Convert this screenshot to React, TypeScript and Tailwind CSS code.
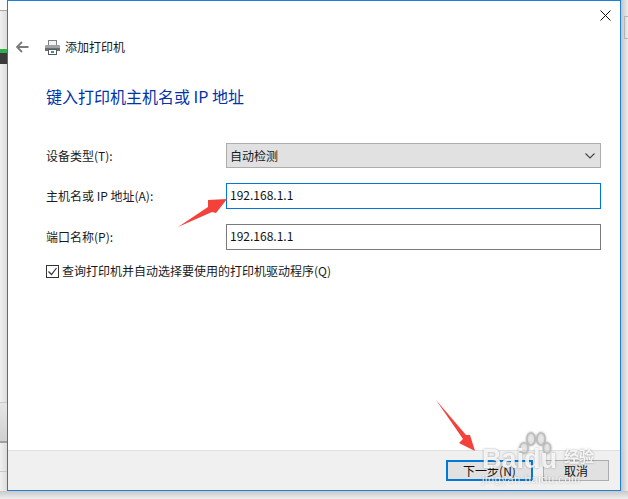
import React from 'react';

const font = "[font-family:'Noto_Sans_CJK_SC','Liberation_Sans',sans-serif]";

const Field: React.FC<{ label: string; children: React.ReactNode }> = ({ label, children }) => (
  <div className="flex items-center">
    <div className="w-[180px] text-[12px] leading-[16px] text-[#1a1a1a]">{label}</div>
    <div className="flex-1">{children}</div>
  </div>
);

const PrinterIcon = () => (
  <svg width="17" height="17" viewBox="0 0 17 17">
    <rect x="4.5" y="1.5" width="8" height="5" fill="#f4f4f4" stroke="#808080" />
    <rect x="1" y="6" width="15" height="6" rx="1" fill="#a0a3a6" />
    <rect x="1" y="9" width="15" height="3" fill="#6a6e72" />
    <rect x="4.5" y="10.5" width="8" height="5" fill="#fff" stroke="#5a5a5a" />
    <rect x="7" y="12" width="3" height="2" fill="#2f8fb8" />
  </svg>
);

const App: React.FC = () => {
  return (
    <div className={`relative w-[628px] h-[499px] overflow-hidden bg-[#e4e4e4] ${font}`}>
      <div className="flex h-[491px]">
        {/* Desktop left of the dialog */}
        <div className="w-[7px] flex flex-col bg-[#ececec]">
          <div className="h-[11px] bg-[#fafafa] border-b border-[#a8a8a8]" />
          <div className="h-[38px] bg-gradient-to-r from-[#f0f0f0] to-[#dcdcdc]" />
          <div className="h-[15px] bg-[#3a3a3a] border-t-[4px] border-[#2fb04a]" />
          <div className="h-[338px] bg-gradient-to-r from-[#f0f0f0] to-[#dcdcdc]" />
          <div className="h-[41px] border-t border-[#c8c8c8] bg-gradient-to-b from-[#e6e6e6] to-[#d0d0d0] border-b-2 border-b-[#a0a0a0]" />
          <div className="h-[29px] border-b border-[#c8c8c8] bg-gradient-to-r from-[#f0f0f0] to-[#dcdcdc]" />
          <div className="flex-1 bg-gradient-to-r from-[#f0f0f0] to-[#dcdcdc]" />
        </div>

        {/* Dialog */}
        <div className="w-[614px] flex flex-col border border-[#1f7fd6] border-l-[#2a78c4] bg-white">
          <div className="flex justify-end h-[30px] pt-[9px] pr-[9px]">
            <svg width="11" height="11" viewBox="0 0 11 11" stroke="#111" strokeWidth="1">
              <path d="M0.5 0.5L10.5 10.5M10.5 0.5L0.5 10.5" />
            </svg>
          </div>

          <div className="flex items-center h-[32px] pl-[8px]">
            <svg width="13" height="12" viewBox="0 0 13 12" fill="none" stroke="#7a7a7a" strokeWidth="1.8">
              <path d="M12.5 6H1.5M6 1L1 6l5 5" />
            </svg>
            <div className="ml-[15px]">
              <PrinterIcon />
            </div>
            <span className="ml-[4px] text-[12px] leading-[16px] text-[#1a1a1a]">添加打印机</span>
          </div>

          <div className="pl-[38px] pr-[19px] flex flex-col flex-1">
            <h1 className="mt-[21px] text-[16px] leading-[24px] font-normal text-[#0033a8]">键入打印机主机名或 IP 地址</h1>

            <div className="mt-[35px] flex flex-col gap-[15px]">
              <Field label="设备类型(T):">
                <div className="h-[25px] flex items-center justify-between pl-[3px] pr-[5px] bg-[#e1e1e1] border-[1.5px] border-[#adadad] text-[12px] text-[#1a1a1a]">
                  <span>自动检测</span>
                  <svg width="10" height="6" viewBox="0 0 10 6" fill="none" stroke="#444" strokeWidth="1.1">
                    <path d="M0.5 0.5L5 5l4.5-4.5" />
                  </svg>
                </div>
              </Field>
              <Field label="主机名或 IP 地址(A):">
                <div className="h-[26px] flex items-center pl-[3px] pb-[3px] border-[1.5px] border-[#0078d7] text-[12px] text-[#111]">192.168.1.1</div>
              </Field>
              <Field label="端口名称(P):">
                <div className="h-[26px] flex items-center pl-[3px] pb-[3px] border-[1.5px] border-[#7a7a7a] text-[12px] text-[#111]">192.168.1.1</div>
              </Field>
            </div>

            <div className="mt-[13px] flex items-center">
              <div className="w-[13px] h-[13px] border border-[#333] flex items-center justify-center">
                <svg width="11" height="11" viewBox="0 0 11 11" fill="none" stroke="#333" strokeWidth="1.2">
                  <path d="M1.5 5.5l3 3 5-6.5" />
                </svg>
              </div>
              <span className="ml-[3px] text-[12px] leading-[16px] text-[#1a1a1a]">查询打印机并自动选择要使用的打印机驱动程序(Q)</span>
            </div>
          </div>

          {/* Footer buttons */}
          <div className="h-[40px] flex items-start justify-end gap-[10px] pt-[9px] pr-[11px] bg-[#f0f0f0] border-t border-[#dfdfdf]">
            <button className="w-[87px] h-[21px] flex items-center justify-center bg-[#e1e1e1] border-2 border-[#0078d7] text-[12px] text-[#111]">下一步(N)</button>
            <button className="w-[66px] h-[21px] flex items-center justify-center bg-[#e1e1e1] border-[1.5px] border-[#adadad] text-[12px] text-[#111]">取消</button>
          </div>
        </div>

        {/* Desktop right of the dialog */}
        <div className="flex-1 flex flex-col bg-gradient-to-r from-[#c4c4c4] to-[#eeeeee]">
          <div className="mt-[16px] ml-[3px] h-[23px] border border-r-0 border-[#b4b4b4]" />
        </div>
      </div>
      <div className="h-[8px] bg-gradient-to-b from-[#c8c8c8] to-[#efefef]" />

      {/* Red annotation arrows */}
      <svg className="absolute left-0 top-0 pointer-events-none" width="628" height="499" viewBox="0 0 628 499">
        <polygon points="178,227 208,207 208,200 227,199 216,213 212,212" fill="#f4423a" />
        <polygon points="436,400 466,435 470,435 475,451 459,443 463,439" fill="#f4423a" />
      </svg>

      {/* Baidu watermark */}
      <div className="absolute left-[482px] top-[432px] w-[115px] h-[52px] pointer-events-none text-white [filter:drop-shadow(0_0_1px_rgba(90,90,90,0.6))]">
        <svg className="absolute left-[36px] top-0" width="34" height="44" viewBox="0 0 34 44" fill="#ffffff" fillOpacity="0.45" stroke="#bdbdbd" strokeWidth="1.5">
          <ellipse cx="6" cy="16" rx="4" ry="5" />
          <ellipse cx="13" cy="7" rx="4" ry="6" />
          <ellipse cx="23" cy="7" rx="4" ry="6" />
          <ellipse cx="29" cy="16" rx="3.5" ry="5" />
        </svg>
        <span className="absolute left-0 top-[12px] text-[27px] leading-[30px] font-bold [font-family:'Liberation_Sans',sans-serif] opacity-85">Baidu</span>
        <span className="absolute left-[82px] top-[14px] text-[15px] leading-[20px] font-bold opacity-85">经验</span>
        <span className="absolute left-0 top-[41px] text-[11px] leading-[13px] tracking-[0.6px] [font-family:'Liberation_Sans',sans-serif] opacity-75">jingyan.baidu.com</span>
      </div>
    </div>
  );
};

export default App;
